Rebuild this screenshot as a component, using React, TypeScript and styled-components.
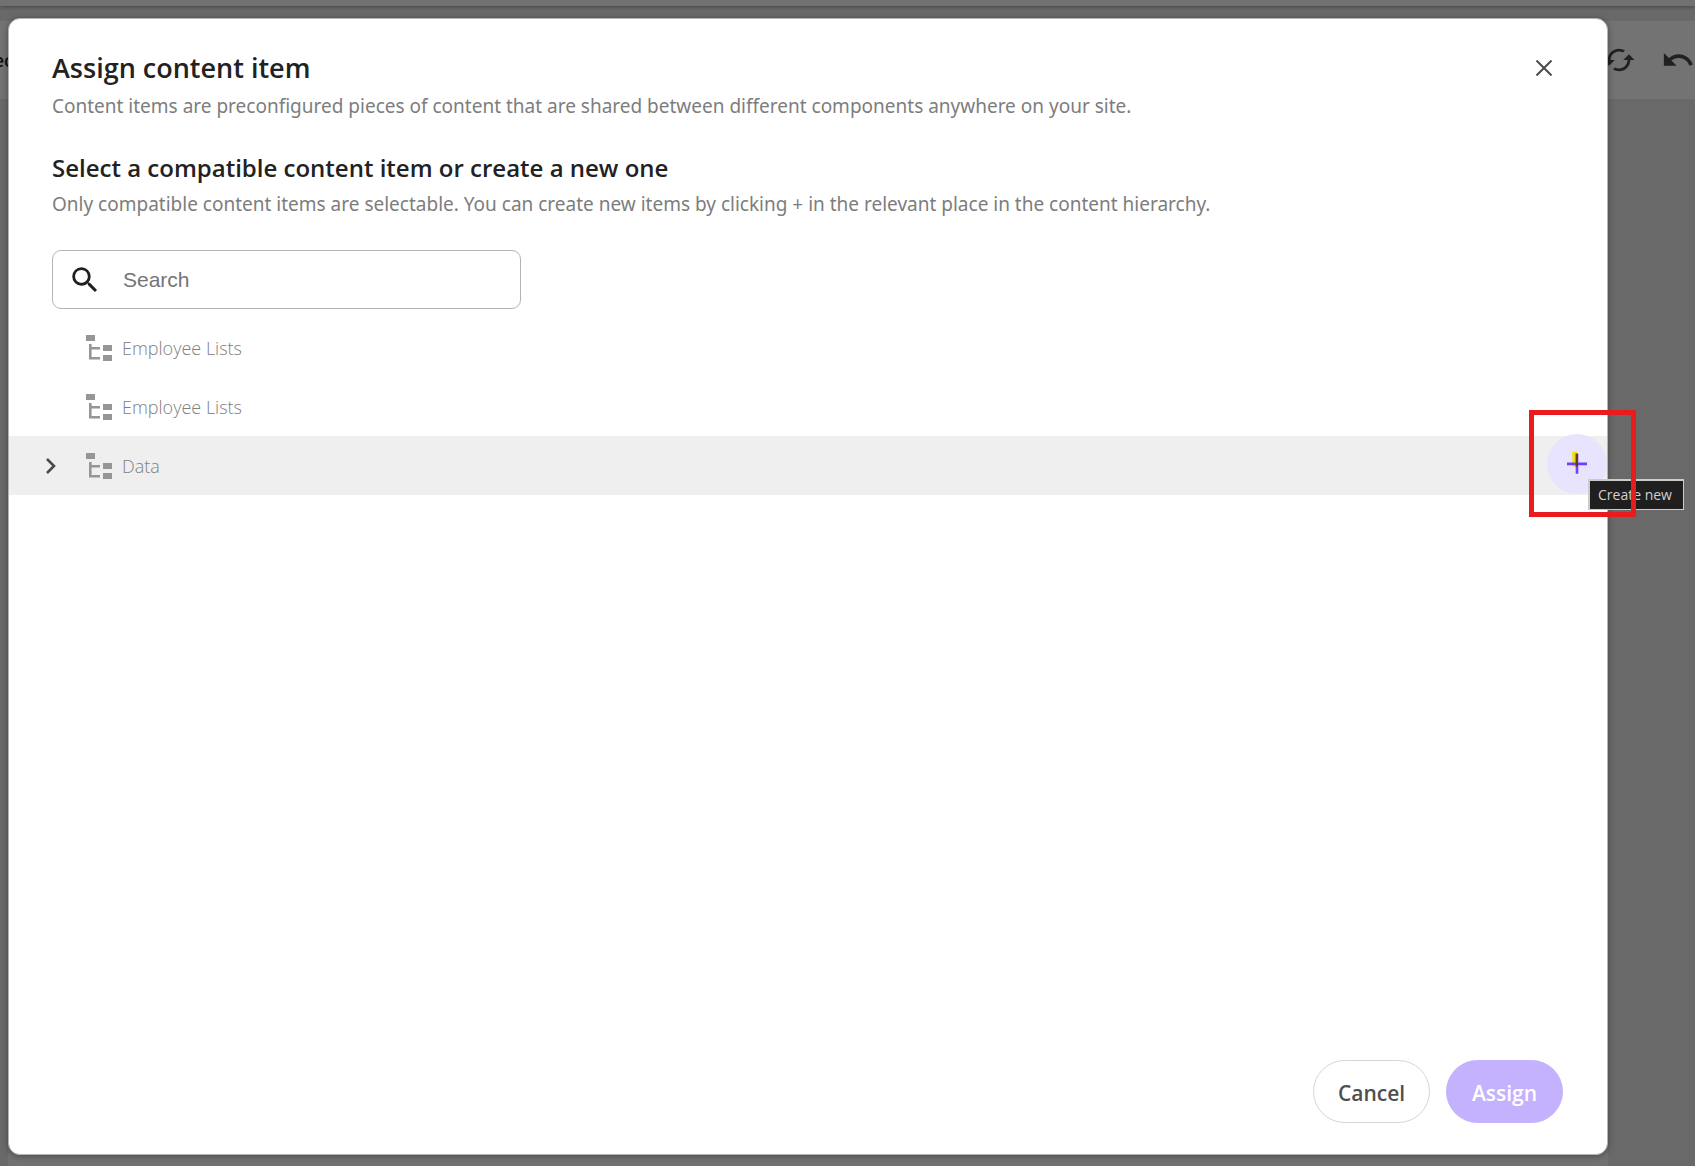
import React from "react";
import styled, { createGlobalStyle } from "styled-components";
import { MdCached, MdSearch, MdUndo } from "react-icons/md";

const ui = `"Segoe UI", "Open Sans", "Noto Sans", sans-serif`;

const GlobalStyle = createGlobalStyle`
  * { box-sizing: border-box; }
  body { margin: 0; font-family: ${ui}; color: #222; background: #e9e9e9; }
  h1, h2, p, ul { margin: 0; padding: 0; }
  button { font-family: inherit; padding: 0; cursor: pointer; }
`;

const Page = styled.div`
  position: relative;
  display: flex;
  flex-direction: column;
  height: 100vh;
  overflow: hidden;
`;

const TopStrip = styled.div`
  height: 6px;
  flex: none;
  background: #fbfbfb;
  box-shadow: 0 1px 4px rgba(0, 0, 0, 0.35);
`;

const Toolbar = styled.div`
  display: flex;
  align-items: center;
  justify-content: space-between;
  height: 78px;
  flex: none;
  margin-top: 15px;
  background: #fff;
`;

const ToolbarLabel = styled.span`
  display: flex;
  justify-content: flex-end;
  width: 13px;
  overflow: hidden;
  font-size: 18px;
  font-weight: 600;
`;

const ToolbarActions = styled.div`
  display: flex;
  gap: 25px;
`;

const ToolButton = styled.button`
  display: flex;
  border: 0;
  background: none;
  color: #4b4b4b;
`;

const Canvas = styled.div`
  flex: 1;
  padding: 0 87px 0 8px;
`;

const Sheet = styled.div`
  height: 100%;
  background: #fbfbfb;
`;

const Overlay = styled.div`
  position: absolute;
  inset: 0;
  display: flex;
  padding: 18px 87px 11px 8px;
  background: rgba(0, 0, 0, 0.55);
`;

const Dialog = styled.section`
  flex: 1;
  display: flex;
  flex-direction: column;
  border: 1px solid #b4b4b4;
  border-radius: 12px;
  background: #fff;
  box-shadow: 0 1px 6px rgba(0, 0, 0, 0.35);
`;

const Header = styled.header`
  display: flex;
  justify-content: space-between;
  align-items: flex-start;
  padding: 29px 43px 0;
`;

const Title = styled.h1`
  font-size: 27px;
  line-height: 40px;
  font-weight: 600;
`;

const Subtitle = styled.h2`
  margin-top: 26px;
  font-size: 24px;
  line-height: 36px;
  font-weight: 600;
`;

const Note = styled.p`
  font-family: "Segoe UI", "Noto Sans", sans-serif;
  font-size: 19px;
  line-height: 36px;
  color: #7d7d7d;
`;

const CloseButton = styled.button`
  display: grid;
  place-items: center;
  width: 40px;
  height: 40px;
  border: 0;
  background: none;
`;

const SearchBox = styled.label`
  display: flex;
  align-items: center;
  gap: 21px;
  width: 469px;
  height: 59px;
  margin: 28px 43px 9px;
  padding: 0 15px;
  border: 1px solid #b4b4b4;
  border-radius: 9px;
`;

const SearchInput = styled.input`
  flex: 1;
  min-width: 0;
  padding: 0;
  border: 0;
  outline: 0;
  font-family: "Liberation Sans", Arial, sans-serif;
  font-size: 21px;
  &::placeholder { color: #757575; opacity: 1; }
`;

const Tree = styled.ul`
  flex: 1;
  list-style: none;
`;

const TreeRow = styled.li<{ $active?: boolean }>`
  display: flex;
  align-items: center;
  height: 59px;
  padding-left: 30px;
  background: ${(p) => (p.$active ? "#efefef" : "transparent")};
`;

const Expander = styled.button`
  display: grid;
  place-items: center;
  width: 24px;
  height: 24px;
  border: 0;
  background: none;
`;

const ExpanderSpace = styled.span`
  width: 24px;
`;

const ItemLabel = styled.span`
  display: flex;
  align-items: center;
  gap: 10px;
  margin-left: 23px;
  font-size: 18px;
  font-weight: 300;
  color: #808080;
`;

const AddAnchor = styled.div`
  position: relative;
  margin-left: auto;
`;

const AddButton = styled.button`
  display: grid;
  place-items: center;
  width: 60px;
  height: 60px;
  margin-top: -4px;
  border: 0;
  border-radius: 50%;
  background: #e9e4fe;
`;

const Tooltip = styled.span`
  position: absolute;
  left: 41px;
  top: 41px;
  padding: 0 11px 0 8px;
  border: 2px solid #ccc;
  border-width: 2px 1px 1px 2px;
  background: #1f1f1f;
  color: #d0d0d0;
  font-size: 14px;
  line-height: 28px;
  white-space: nowrap;
`;

const Highlight = styled.span`
  position: absolute;
  left: -18px;
  top: -28px;
  width: 107px;
  height: 107px;
  border: 5px solid #e81c1c;
  pointer-events: none;
`;

const Footer = styled.footer`
  display: flex;
  justify-content: flex-end;
  gap: 16px;
  padding: 0 44px 31px;
`;

const ActionButton = styled.button<{ $primary?: boolean }>`
  width: 117px;
  height: 63px;
  padding-top: 2px;
  border: 1px solid ${(p) => (p.$primary ? "#c4b2fe" : "#d6d6d6")};
  border-radius: 32px;
  background: ${(p) => (p.$primary ? "#c4b2fe" : "#fff")};
  color: ${(p) => (p.$primary ? "#fff" : "#4f4f4f")};
  font-size: 21px;
  font-weight: 600;
`;

const TreeIcon = () => (
  <svg width="26" height="26" viewBox="0 0 26 26" fill="#969696" aria-hidden="true">
    <path d="M0 0h9v6H0zM17 10h9v6h-9zM17 20h9v6h-9zM3 9h2.6v3h8.4v2.4H5.6V22H14v2.6H3z" />
  </svg>
);

const rows = [
  { name: "Employee Lists" },
  { name: "Employee Lists" },
  { name: "Data", active: true },
];

export default function App() {
  return (
    <>
      <GlobalStyle />
      <Page>
        <TopStrip />
        <Toolbar>
          <ToolbarLabel>ec</ToolbarLabel>
          <ToolbarActions>
            <ToolButton aria-label="Refresh">
              <MdCached size={34} />
            </ToolButton>
            <ToolButton aria-label="Undo">
              <MdUndo size={34} />
            </ToolButton>
          </ToolbarActions>
        </Toolbar>
        <Canvas>
          <Sheet />
        </Canvas>
        <Overlay>
          <Dialog role="dialog" aria-labelledby="dialog-title">
            <Header>
              <div>
                <Title id="dialog-title">Assign content item</Title>
                <Note>Content items are preconfigured pieces of content that are shared between different components anywhere on your site.</Note>
                <Subtitle>Select a compatible content item or create a new one</Subtitle>
                <Note>Only compatible content items are selectable. You can create new items by clicking + in the relevant place in the content hierarchy.</Note>
              </div>
              <CloseButton aria-label="Close">
                <svg width="16" height="16" viewBox="0 0 16 16" stroke="#4b4b4b" strokeWidth="2">
                  <path d="M.5 .5l15 15M15.5 .5l-15 15" />
                </svg>
              </CloseButton>
            </Header>
            <SearchBox>
              <MdSearch size={34} color="#1f1f1f" aria-hidden="true" />
              <SearchInput type="search" placeholder="Search" aria-label="Search" />
            </SearchBox>
            <Tree>
              {rows.map((row, i) => (
                <TreeRow key={i} $active={row.active}>
                  {row.active ? (
                    <Expander aria-label={`Expand ${row.name}`}>
                      <svg width="10" height="16" viewBox="0 0 10 16" fill="none" stroke="#4b4b4b" strokeWidth="2.6">
                        <path d="M1 1l7 7-7 7" />
                      </svg>
                    </Expander>
                  ) : (
                    <ExpanderSpace />
                  )}
                  <ItemLabel>
                    <TreeIcon />
                    {row.name}
                  </ItemLabel>
                  {row.active && (
                    <AddAnchor>
                      <AddButton aria-label="Create new">
                        <svg width="22" height="26" viewBox="0 0 22 26">
                          <path fill="#ece400" d="M6.3 .5H11v15H6.3z" />
                          <path fill="#6e3fff" d="M1 11.6h20v2.6H1zM9.7 2.7h2.6v20H9.7z" />
                          <path fill="#6b3a10" d="M9.7 2.7h2.3v12.8H9.7z" />
                        </svg>
                      </AddButton>
                      <Tooltip role="tooltip">Create new</Tooltip>
                      <Highlight />
                    </AddAnchor>
                  )}
                </TreeRow>
              ))}
            </Tree>
            <Footer>
              <ActionButton>Cancel</ActionButton>
              <ActionButton $primary>Assign</ActionButton>
            </Footer>
          </Dialog>
        </Overlay>
      </Page>
    </>
  );
}
